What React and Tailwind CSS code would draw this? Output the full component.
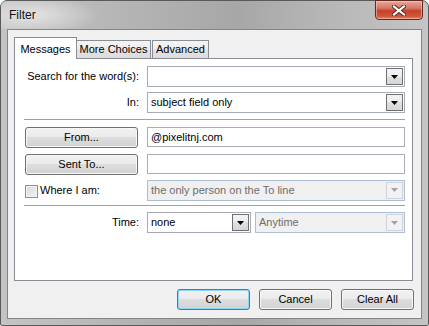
import React from 'react';

const Arrow = ({ disabled }) => (
  <svg width="7" height="4" viewBox="0 0 7 4">
    <path d="M0 0h7L3.5 4z" fill={disabled ? '#a3a3a3' : '#000'} />
  </svg>
);

const Combo = ({ value, disabled, className = '' }) => (
  <div
    className={`h-[21px] flex items-center pl-[3px] pr-px border ${
      disabled ? 'border-[#adbed2] bg-[#f0f0f0] text-[#6d6d6d]' : 'border-[#a5acb5] bg-white text-black'
    } ${className}`}
  >
    <span className="flex-1 truncate">{value}</span>
    <div
      className={`w-[17px] h-[17px] flex items-center justify-center border ${
        disabled
          ? 'border-[#cfd5db] bg-[#f2f2f2]'
          : 'border-[#707070] bg-[linear-gradient(#f4f4f4,#ececec_50%,#e0e0e0_50%,#d6d6d6)]'
      }`}
    >
      <Arrow disabled={disabled} />
    </div>
  </div>
);

const TextBox = ({ value }) => (
  <div className="flex-1 h-[20px] flex items-center pl-[3px] border border-[#abadb3] bg-white">{value}</div>
);

const Button = ({ label, primary, className = '' }) => (
  <button
    className={`h-[21px] rounded-[3px] border bg-[linear-gradient(#f2f2f2,#ebebeb_45%,#dddddd_50%,#d2d2d2)] text-black flex items-center justify-center ${
      primary ? 'border-[#3c7fb1] shadow-[inset_0_0_0_1px_#8fd3f5]' : 'border-[#707070] shadow-[inset_0_0_0_1px_#f8f8f8]'
    } ${className}`}
  >
    {label}
  </button>
);

const Separator = () => <div className="h-px bg-[#a0a0a0] ml-[-1px]" />;

export default function App() {
  return (
    <div className="w-[429px] h-[326px] flex flex-col rounded-t-[7px] rounded-b-[2px] border border-[#5a5a5a] bg-[linear-gradient(90deg,#c4c4c4,#b4b4b4_30%,#a7a7a7_55%,#b9b9b9_80%,#c4c4c4)] font-['Liberation_Sans',Arial,sans-serif] text-[11px] text-black select-none">
      <div className="relative h-[28px] shrink-0 flex items-center pl-[8px] pb-[1px] bg-[radial-gradient(ellipse_70px_20px_at_28px_14px,#e4e4e4,transparent)]">
        <span className="text-[12px] text-[#111]">Filter</span>
        <div className="absolute right-[5px] top-[-1px] w-[48px] h-[20px] rounded-b-[4px] border border-[#5e2a22] bg-[linear-gradient(#e9a89a,#d47765_40%,#c5412a_55%,#d0573c_85%,#e08a6c)] shadow-[inset_0_0_0_1px_rgba(255,210,200,0.5)] flex items-center justify-center">
          <svg width="14" height="11" viewBox="0 0 14 11">
            <path d="M2 1.5L12 9.5M12 1.5L2 9.5" stroke="#4a2a26" strokeWidth="4" strokeLinecap="square" />
            <path d="M2 1.5L12 9.5M12 1.5L2 9.5" stroke="#ffffff" strokeWidth="2.2" strokeLinecap="square" />
          </svg>
        </div>
      </div>

      <div className="flex-1 mx-[6px] mb-[6px] border border-[#858585] bg-[#f0f0f0] flex flex-col pt-[7px] pl-[6px]">
        <div className="flex items-end h-[21px]">
          <div className="relative z-10 h-[22px] mb-[-1px] w-[63px] border border-b-0 border-[#898c95] bg-white flex items-start justify-center pt-[3px]">
            Messages
          </div>
          <div className="h-[18px] w-[74px] border border-b-0 border-l-0 border-[#898c95] bg-[linear-gradient(#f4f4f4,#ececec_50%,#e4e4e4_50%,#dcdcdc)] flex items-center justify-center">
            More Choices
          </div>
          <div className="h-[18px] w-[57px] ml-px border border-b-0 border-[#898c95] bg-[linear-gradient(#f4f4f4,#ececec_50%,#e4e4e4_50%,#dcdcdc)] flex items-center justify-center">
            Advanced
          </div>
        </div>

        <div className="w-[399px] h-[223px] border border-[#898c95] bg-white pt-[7px] pl-[10px] pr-[7px] flex flex-col">
          <div className="flex items-center h-[21px]">
            <span className="w-[114px] text-right">Search for the word(s):</span>
            <Combo value="" className="flex-1 ml-[8px]" />
          </div>
          <div className="flex items-center h-[21px] mt-[5px]">
            <span className="w-[114px] text-right">In:</span>
            <Combo value="subject field only" className="flex-1 ml-[8px]" />
          </div>
          <div className="mt-[6px]">
            <Separator />
          </div>
          <div className="flex items-center h-[20px] mt-[7px]">
            <Button label="From..." className="w-[113px] h-[20px] mt-px" />
            <div className="w-[9px]" />
            <TextBox value="@pixelitnj.com" />
          </div>
          <div className="flex items-center h-[20px] mt-[7px]">
            <Button label="Sent To..." className="w-[113px] h-[20px] mt-px" />
            <div className="w-[9px]" />
            <TextBox value="" />
          </div>
          <div className="flex items-center h-[20px] mt-[6px]">
            <div className="w-[122px] flex items-center">
              <div className="w-[13px] h-[13px] border border-[#8e8f8f] bg-[linear-gradient(135deg,#d8d8d8,#f4f4f4)] shadow-[inset_0_0_0_1px_#f4f4f4] mt-[3px]" />
              <span className="ml-[2px]">Where I am:</span>
            </div>
            <Combo value="the only person on the To line" disabled className="flex-1 h-[20px]" />
          </div>
          <div className="mt-[5px]">
            <Separator />
          </div>
          <div className="flex items-center h-[21px] mt-[6px]">
            <span className="w-[114px] text-right">Time:</span>
            <Combo value="none" className="w-[104px] ml-[8px]" />
            <Combo value="Anytime" disabled className="flex-1 ml-[4px]" />
          </div>
        </div>

        <div className="flex justify-end gap-[9px] mt-[8px] pr-[7px]">
          <Button label="OK" primary className="w-[73px]" />
          <Button label="Cancel" className="w-[73px]" />
          <Button label="Clear All" className="w-[73px]" />
        </div>
      </div>
    </div>
  );
}
